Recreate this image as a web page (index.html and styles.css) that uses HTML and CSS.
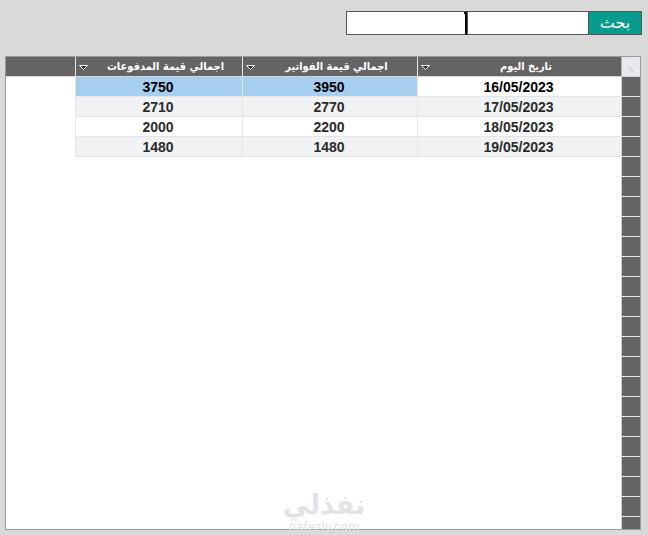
FILE: index.html
```
<!DOCTYPE html>
<html lang="ar" dir="rtl">
<head>
    <meta charset="UTF-8">
    <meta name="viewport" content="width=device-width, initial-scale=1.0">
    <title>بحث</title>
    <link rel="stylesheet" href="styles.css">
</head>
<body>
    <form class="search" onsubmit="return false">
        <button class="search-button" type="submit">بحث</button>
        <span class="field">
            <input class="search-input" type="text" id="from" aria-label="من تاريخ">
        </span>
        <span class="field active-field">
            <input class="search-input" type="text" id="to" aria-label="إلى تاريخ">
        </span>
    </form>

    <div class="sheet">
        <table class="grid">
            <colgroup>
                <col class="col-select">
                <col class="col-date">
                <col class="col-bills">
                <col class="col-paid">
                <col>
            </colgroup>
            <thead>
                <tr>
                    <th class="corner">
                        <svg width="18" height="19" viewBox="0 0 18 19"><path d="M5 5.500L14 14.500H9Z" fill="#d3d6da"/><path d="M5 5.500L14 14.500" stroke="#fff"/></svg>
                    </th>
                    <th><div class="head"><span class="label">تاريخ اليوم</span><svg class="arrow" width="11" height="7" viewBox="0 0 11 7"><path d="M1.500 1.500H9.500L5.500 5.500Z" fill="#333" stroke="#fff"/></svg></div></th>
                    <th><div class="head"><span class="label">اجمالي قيمة الفواتير</span><svg class="arrow" width="11" height="7" viewBox="0 0 11 7"><path d="M1.500 1.500H9.500L5.500 5.500Z" fill="#333" stroke="#fff"/></svg></div></th>
                    <th><div class="head"><span class="label">اجمالي قيمة المدفوعات</span><svg class="arrow" width="11" height="7" viewBox="0 0 11 7"><path d="M1.500 1.500H9.500L5.500 5.500Z" fill="#333" stroke="#fff"/></svg></div></th>
                    <th class="rest"></th>
                </tr>
            </thead>
            <tbody>
                <tr class="selected"><td class="handle"></td><td>16/05/2023</td><td>3950</td><td>3750</td><td class="blank"></td></tr>
                <tr><td class="handle"></td><td>17/05/2023</td><td>2770</td><td>2710</td><td class="blank"></td></tr>
                <tr><td class="handle"></td><td>18/05/2023</td><td>2200</td><td>2000</td><td class="blank"></td></tr>
                <tr><td class="handle"></td><td>19/05/2023</td><td>1480</td><td>1480</td><td class="blank"></td></tr>
            </tbody>
        </table>
        <div class="empty-rows"></div>
        <div class="watermark">
            <div class="brand">نفذلي</div>
            <div class="site">nafezly.com</div>
        </div>
    </div>
</body>
</html>
```
FILE: styles.css
```
* {
    box-sizing: border-box;
}

body {
    font-family: "Liberation Sans", "DejaVu Sans", sans-serif;
    background-color: #d9d9d9;
    margin: 0;
    padding: 11px 7px 5px 5px;
    display: flex;
    flex-direction: column;
    gap: 21px;
    height: 100vh;
}

.search {
    display: flex;
    width: 296px;
    height: 24px;
    margin-right: -1px;
}

.search-button {
    width: 54px;
    padding: 0;
    background-color: #089c8e;
    border: 1px solid #555;
    color: white;
    font-family: "DejaVu Sans", sans-serif;
    font-size: 16px;
    line-height: 20px;
}

.field {
    flex: 1;
    position: relative;
}

.search-input {
    display: block;
    width: 100%;
    height: 100%;
    padding: 0 4px;
    background-color: white;
    border: 1px solid #555;
    border-right: none;
    border-radius: 0;
    font-size: 14px;
    outline: none;
}

.active-field .search-input {
    border-right: 2px solid #000;
}

/* flag on top of the text cursor */
.active-field:before {
    content: '';
    position: absolute;
    top: 1px;
    right: 1px;
    width: 2px;
    height: 2px;
    background-color: #000;
}

.sheet {
    flex: 1;
    min-height: 0;
    display: flex;
    flex-direction: column;
    position: relative;
    background-color: white;
    border: 1px solid #9b9b9b;
}

.grid {
    width: 100%;
    table-layout: fixed;
    border-collapse: separate;
    border-spacing: 0;
}

.col-select {
    width: 19px;
}

.col-date {
    width: 204px;
}

.col-bills {
    width: 175px;
}

.col-paid {
    width: 167px;
}

.grid th {
    height: 20px;
    padding: 0;
    background-color: #646464;
    border-left: 1px solid #e6e6e6;
    border-bottom: 1px solid #d5d8da;
    color: white;
    font-family: "DejaVu Sans Condensed", "DejaVu Sans", sans-serif;
    font-size: 11px;
    line-height: 18px;
}

.grid .corner {
    background-color: #e6e8eb;
    border-left-color: #b5b5b5;
}

.grid .rest {
    border-left: none;
}

.corner svg {
    display: block;
}

.head {
    display: flex;
    align-items: center;
    height: 19px;
    padding-left: 2px;
}

.label {
    flex: 1;
    white-space: nowrap;
}

.arrow {
    flex: none;
    margin-top: 2px;
}

.grid td {
    height: 20px;
    padding: 1px 2px 0 0;
    border-left: 1px solid #e1e6ea;
    border-bottom: 1px solid #e1e6ea;
    color: #2b2b2b;
    font-size: 14px;
    font-weight: bold;
    line-height: 18px;
    text-align: center;
}

.grid tr:nth-child(even) td {
    background-color: #f1f2f3;
}

.grid .selected td {
    background-color: #a5ceef;
    color: #000;
}

.grid .selected td:nth-child(2) {
    background-color: white;
}

.grid tr .handle.handle.handle {
    padding: 0;
    background-color: #646466;
    border-left-color: #d5d5d5;
    border-bottom-color: #e8e8e8;
}

.grid tr .blank.blank.blank {
    background-color: white;
    border: none;
}

.empty-rows {
    flex: 1;
    width: 19px;
    border-left: 1px solid #d5d5d5;
    background: repeating-linear-gradient(#646466 0 19px, #e8e8e8 19px 20px);
}

.watermark {
    position: absolute;
    left: 50%;
    bottom: -5px;
    width: 90px;
    margin-left: -44px;
    color: #e3e3e5;
    text-align: center;
    pointer-events: none;
}

.brand {
    font-family: "DejaVu Sans", sans-serif;
    font-size: 27px;
    font-weight: bold;
    line-height: 30px;
}

.site {
    font-family: "DejaVu Sans", sans-serif;
    font-size: 12px;
    line-height: 14px;
}
```
